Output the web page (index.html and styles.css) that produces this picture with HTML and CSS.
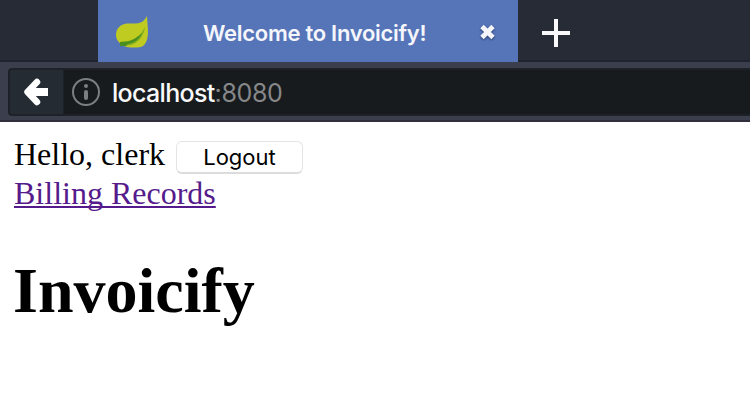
FILE: index.html
```
<!DOCTYPE html>
<html lang="en">
<head>
<meta charset="utf-8">
<title>Welcome to Invoicify!</title>
<link rel="stylesheet" href="styles.css">
</head>
<body>
<header class="browser">
  <div class="tabs">
    <div class="tab">
      <svg class="leaf" width="32" height="32" viewBox="0 0 32 32">
        <path d="M31 0C28 5 26 7 20 7.500H11C4 8 0 13 0 19C0 23 2 26 5 28C6 29 4 30 8 30C12 32 24 32 27 30C31 27 32 21 32 15Z" fill="#bfcb20"/>
        <path d="M4 26L12 25C20 23 25 19 29 11C28 20 22 27 15 29L5 30Z" fill="#83ae20"/>
        <path d="M4 26L12 25.500C18 24 23 20 26 17C24 23 18 27 12 28L10 30H4Z" fill="#4b8f20"/>
      </svg>
      <span class="tab-title">Welcome to Invoicify!</span>
      <svg class="close" width="18" height="18" viewBox="0 0 18 18"><path d="M3 2.500L14 13.500M14 2.500L3 13.500" stroke="#f4f5f8" stroke-width="4.800"/></svg>
    </div>
    <svg class="plus" width="28" height="28" viewBox="0 0 28 28"><path d="M14 0V28M0 14H28" stroke="#f9f9fb" stroke-width="4"/></svg>
  </div>
  <div class="toolbar">
    <div class="address">
      <div class="back">
        <svg width="24" height="28" viewBox="0 0 24 28"><path d="M13 4L3.500 14L13 24M5 14H21" fill="none" stroke="#fff" stroke-width="6.500" stroke-linecap="round" stroke-linejoin="round"/><path d="M6 14H24" stroke="#fff" stroke-width="8"/></svg>
      </div>
      <svg class="info" width="28" height="28" viewBox="0 0 28 28"><circle cx="14" cy="14" r="13" fill="none" stroke="#7c7f81" stroke-width="2"/><circle cx="14" cy="8" r="2" fill="#7c7f81"/><path d="M14 14V20" stroke="#7c7f81" stroke-width="4" stroke-linecap="round"/></svg>
      <span class="url">localhost<span class="port">:8080</span></span>
    </div>
  </div>
</header>
<main class="page">
  <div class="greeting"><span class="hello">Hello, clerk</span><button class="logout">Logout</button></div>
  <a class="records" href="#">Billing Records</a>
  <h1 class="heading">Invoicify</h1>
</main>
</body>
</html>
```

FILE: styles.css
```
* { box-sizing: border-box; }
body { margin: 0; width: 750px; height: 402px; overflow: hidden; background: #fff; color: #000; font-family: "Liberation Serif", serif; }
svg { display: block; flex: none; }
.tabs { display: flex; height: 62px; padding-left: 98px; background: #272b35; box-shadow: inset 0 -2px #20232d; }
.tab { display: flex; align-items: flex-start; width: 420px; height: 62px; padding-left: 18px; background: #5675b9; }
.leaf { margin-top: 16px; }
.tab-title { width: 223px; margin: 18px 0 0 55px; color: #f5f6fb; font: 600 22px/30px Inter, sans-serif; letter-spacing: -0.28px; white-space: nowrap; }
.close { margin: 24px 0 0 53px; filter: drop-shadow(0 1px 1px #253b68); }
.plus { margin: 19px 0 0 24px; }
.toolbar { height: 60px; padding: 6px 0 0 8px; background: #3b3f4d; border-bottom: 2px solid #302f3b; }
.address { display: flex; height: 48px; background: #181b1e; border: 2px solid #1e2228; border-right: 0; border-radius: 4px 0 0 4px; }
.back { width: 54px; height: 44px; padding: 8px 0 0 14px; background: #252b33; border-right: 1px solid #1e2228; border-radius: 2px 0 0 2px; }
.info { margin: 8px 0 0 8px; }
.url { margin: 8px 0 0 12px; color: #f9f9fa; font: 500 25px/30px Inter, sans-serif; letter-spacing: -0.68px; white-space: nowrap; }
.port { color: #86888a; font-weight: 400; letter-spacing: -0.35px; }
.page { padding: 13px 14px 0; }
.greeting { display: flex; height: 39px; font-size: 32px; line-height: 39px; }
.hello { width: 162px; white-space: nowrap; }
.logout { width: 127px; height: 33px; margin-top: 6px; padding: 0; border: 1px solid #e4e4e4; border-bottom: 2px solid #dcdcdc; border-radius: 6px; background: #fff; color: #000; font: 400 22px/28px Inter, sans-serif; }
.records { display: block; width: max-content; height: 39px; color: #551a8b; font-size: 32px; line-height: 39px; text-decoration-thickness: 2px; text-underline-offset: 2px; text-decoration-skip-ink: none; }
.heading { margin: 40px 0 0 -1px; font-size: 64px; line-height: 76px; }
```
